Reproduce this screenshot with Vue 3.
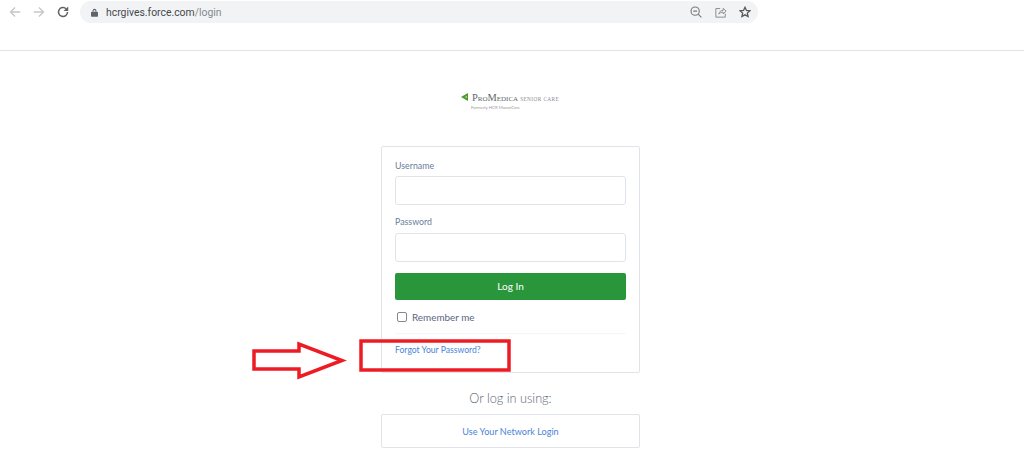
<template>
  <div class="page">
    <header class="browser-bar">
      <div class="nav-icons">
        <svg width="12" height="12" viewBox="0 0 16 16" class="faded">
          <path d="M15 8H2M8 2L2 8l6 6" fill="none" stroke="currentColor" stroke-width="1.800" />
        </svg>
        <svg width="12" height="12" viewBox="0 0 16 16" class="faded">
          <path d="M1 8h13M8 2l6 6-6 6" fill="none" stroke="currentColor" stroke-width="1.800" />
        </svg>
        <svg width="12" height="12" viewBox="0 0 16 16" class="dark">
          <path d="M14 8a6 6 0 1 1-1.800-4.300" fill="none" stroke="currentColor" stroke-width="2" />
          <path d="M15 .5v6.300H8.700z" fill="currentColor" />
        </svg>
      </div>
      <div class="omnibox">
        <svg width="7" height="9" viewBox="0 0 10 12" class="lock">
          <path d="M3 5V3.500a2 2 0 0 1 4 0V5" fill="none" stroke="#5f6368" stroke-width="1.500" />
          <rect x="0" y="5" width="10" height="7" rx="1" fill="#5f6368" />
        </svg>
        <span class="url">hcrgives.force.com<span class="url-path">/login</span></span>
        <div class="omni-icons">
          <svg width="12" height="12" viewBox="0 0 14 14">
            <circle cx="6" cy="6" r="4.800" fill="none" stroke="#777b80" stroke-width="1.300" />
            <path d="M9.500 9.500l3.800 3.800M3.800 6h4.400" fill="none" stroke="#777b80" stroke-width="1.300" />
          </svg>
          <svg width="12" height="12" viewBox="0 0 14 14">
            <path d="M6 3H1v10h11V9" fill="none" stroke="#85898e" stroke-width="1.100" />
            <path d="M4.500 9.500C5 6.500 7 5 9.500 5V2.800L13 6l-3.500 3.200V7.200C7.500 7 5.800 8 4.500 9.500z" fill="none" stroke="#85898e" stroke-width="1.100" />
          </svg>
          <svg width="12" height="12" viewBox="0 0 14 14">
            <path d="M7 1.500l1.700 3.700 4 .4-3 2.700.9 4L7 10.300l-3.600 2 .9-4-3-2.700 4-.4z" fill="none" stroke="#54585c" stroke-width="1.500" />
          </svg>
        </div>
      </div>
    </header>

    <main class="content">
      <div class="logo">
        <div class="logo-row">
          <svg class="logo-mark" width="7" height="8" viewBox="0 0 7 8">
            <path d="M0 4L7 0v8z" fill="#4c9a2a" />
            <path d="M3.500 4L6 3v2z" fill="#b6dc9a" />
          </svg>
          <span class="logo-name">ProMedica</span>
          <span class="logo-sub">SENIOR CARE</span>
        </div>
        <div class="logo-note">Formerly HCR ManorCare</div>
      </div>

      <form class="card" @submit.prevent>
        <label class="field-label">Username</label>
        <input class="field" type="text" />
        <label class="field-label second">Password</label>
        <input class="field" type="password" />
        <button class="login-btn" type="button">Log In</button>
        <label class="remember">
          <span class="check"></span>
          Remember me
        </label>
        <div class="links">
          <a class="link">Forgot Your Password?</a>
        </div>
      </form>

      <p class="or-text">Or log in using:</p>
      <a class="network-btn">Use Your Network Login</a>
    </main>

    <!-- red annotation drawn on top of the screenshot -->
    <svg class="annotation" width="1024" height="467" viewBox="0 0 1024 467">
      <path d="M254 351H299V344L342 360.500 299 377V369H254z" fill="none" stroke="#ed1c24" stroke-width="3.500" />
      <rect x="361" y="341" width="148" height="29" fill="none" stroke="#ed1c24" stroke-width="3.500" />
    </svg>
  </div>
</template>

<script setup>
</script>

<style>
html,
body {
  margin: 0;
  background: #fff;
  overflow: hidden;
}
</style>

<style scoped>
.page {
  position: relative;
  width: 1024px;
  height: 467px;
  overflow: hidden;
  font-family: Lato, "Open Sans", sans-serif;
  background: #fff;
}

.browser-bar {
  display: flex;
  align-items: flex-start;
  height: 50px;
  border-bottom: 1px solid #e3e3e3;
}

.nav-icons {
  display: flex;
  gap: 12px;
  width: 80px;
  padding: 6px 0 0 9px;
  box-sizing: border-box;
}

.faded {
  color: #c4c6c9;
}

.dark {
  color: #5f6368;
}

.omnibox {
  display: flex;
  align-items: center;
  width: 678px;
  height: 22px;
  margin-top: 1px;
  padding: 0 0 0 11px;
  box-sizing: border-box;
  background: #f1f3f4;
  border-radius: 11px;
}

.lock {
  margin-right: 8px;
}

.url {
  font-size: 10.400px;
  color: #44484c;
  font-family: Roboto, sans-serif;
}

.url-path {
  color: #868a8f;
}

.omni-icons {
  display: flex;
  gap: 12.500px;
  margin-left: auto;
  padding-right: 7px;
}

.content {
  display: flex;
  flex-direction: column;
  align-items: center;
  width: 1021px;
}

.logo {
  width: 101px;
  height: 95px;
  padding: 41px 0 0 1px;
  box-sizing: border-box;
}

.logo-row {
  display: flex;
  align-items: baseline;
  white-space: nowrap;
  height: 10px;
  gap: 2px;
}

.logo-mark {
  flex: none;
  align-self: center;
  margin-right: 2px;
}

.logo-name {
  font-family: "Liberation Serif", serif;
  font-variant: small-caps;
  font-size: 10.400px;
  color: #62666a;
}

.logo-sub {
  font-family: "Liberation Serif", serif;
  font-size: 5.300px;
  letter-spacing: 0.4px;
  color: #8b8e91;
}

.logo-note {
  font-size: 4.300px;
  color: #999;
  padding: 3px 0 0 10px;
}

.card {
  display: flex;
  flex-direction: column;
  width: 259px;
  height: 227px;
  padding: 13px 13px 0;
  box-sizing: border-box;
  border: 1px solid #dfe3ea;
  border-radius: 2px;
}

.field-label {
  font-size: 8.800px;
  color: #6b7d9c;
  line-height: 12px;
  margin-bottom: 4px;
}

.second {
  margin-top: 11px;
  margin-bottom: 5px;
}

.field {
  height: 29px;
  padding: 0;
  box-sizing: border-box;
  border: 1px solid #dfe3ea;
  border-radius: 3px;
  background: #fff;
  outline: none;
}

.login-btn {
  height: 27px;
  margin-top: 11px;
  padding: 0 0 2px;
  border: none;
  border-radius: 2px;
  background: #2a963c;
  color: #fff;
  font-family: inherit;
  font-size: 10px;
}

.remember {
  display: flex;
  align-items: center;
  gap: 5px;
  height: 14px;
  margin-top: 10px;
  padding-left: 2px;
  font-size: 9.900px;
  color: #5a6680;
}

.check {
  width: 8px;
  height: 8px;
  border: 1px solid #84888f;
  border-radius: 2px;
}

.links {
  margin-top: 9px;
  padding-top: 8px;
  border-top: 1px solid #f4f6f9;
}

.link {
  display: block;
  line-height: 16px;
  font-size: 8.600px;
  color: #4a84d8;
}

.or-text {
  margin: 16px 0 0;
  font-size: 12.700px;
  line-height: 18px;
  font-weight: 300;
  color: #5c6570;
}

.network-btn {
  display: flex;
  align-items: center;
  justify-content: center;
  width: 259px;
  height: 34px;
  margin-top: 7px;
  box-sizing: border-box;
  border: 1px solid #dfe3ea;
  border-radius: 2px;
  font-size: 9.100px;
  color: #4a84d8;
}

.annotation {
  position: absolute;
  top: 0;
  left: 0;
  pointer-events: none;
}
</style>
